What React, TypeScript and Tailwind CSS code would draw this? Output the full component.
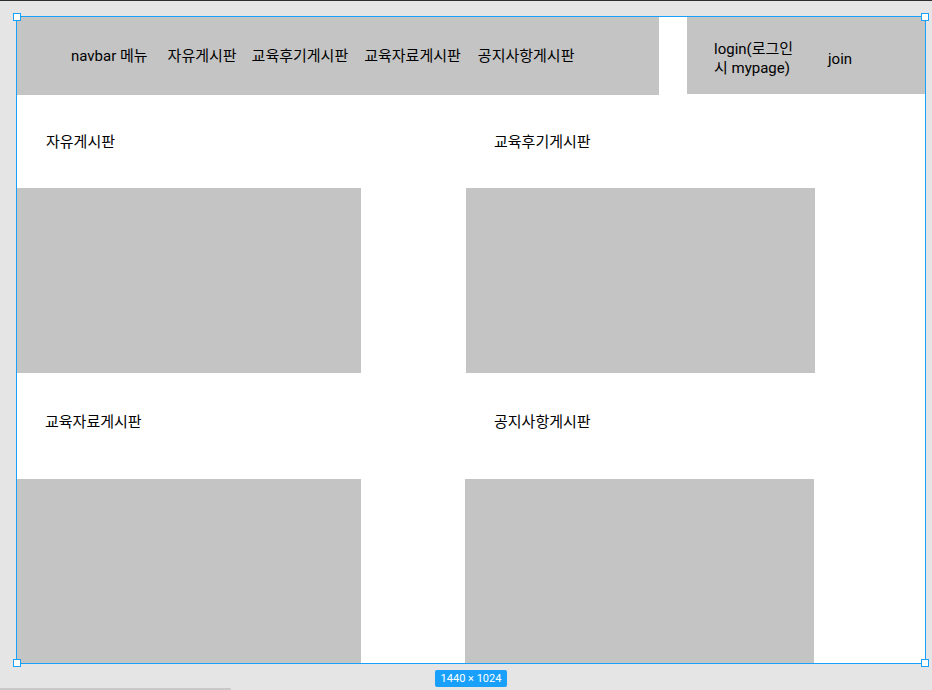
import React from "react";

function K({ children }: { children: React.ReactNode }) {
  return <span className="text-[15px]">{children}</span>;
}

export default function App() {
  return (
    <div className="relative w-[932px] h-[690px] overflow-hidden bg-[#e5e5e5] font-['Roboto','Noto_Sans_CJK_KR',sans-serif] text-[15px] leading-[18px] text-black">
      <div className="h-px bg-[#2c2c2c]" />

      {/* frame */}
      <div className="ml-[16px] mt-[15px] flex h-[648px] w-[910px] flex-col overflow-hidden border border-[#18a0fb] bg-white">
        {/* navbar */}
        <div className="flex h-[78px] shrink-0">
          <div className="flex h-[78px] w-[642px] items-center bg-[#c4c4c4] pb-[1px] pl-[54px]">
            <span>
              navbar <K>메뉴</K>
            </span>
            <span className="ml-[20px]">
              <K>자유게시판</K>
            </span>
            <span className="ml-[15px]">
              <K>교육후기게시판</K>
            </span>
            <span className="ml-[16px]">
              <K>교육자료게시판</K>
            </span>
            <span className="ml-[17px]">
              <K>공지사항게시판</K>
            </span>
          </div>
          <div className="w-[28px]" />
          <div className="flex h-[77px] w-[238px] items-center bg-[#c4c4c4] pl-[27px] pt-[7px]">
            <div className="w-[114px] leading-[19px]">
              login(<K>로그인</K>
              <br />
              <K>시</K> mypage)
            </div>
            <span className="leading-[19px]">join</span>
          </div>
        </div>

        {/* row labels 1 */}
        <div className="flex h-[93px] shrink-0 items-center pt-[1px]">
          <div className="w-[449px] pl-[29px]">
            <K>자유게시판</K>
          </div>
          <div className="pl-[28px]">
            <K>교육후기게시판</K>
          </div>
        </div>

        {/* boxes 1 */}
        <div className="flex h-[185px] shrink-0">
          <div className="w-[344px] bg-[#c4c4c4]" />
          <div className="ml-[105px] w-[349px] bg-[#c4c4c4]" />
        </div>

        {/* row labels 2 */}
        <div className="flex h-[106px] shrink-0 items-center pb-[8px]">
          <div className="w-[448px] pl-[28px]">
            <K>교육자료게시판</K>
          </div>
          <div className="pl-[29px]">
            <K>공지사항게시판</K>
          </div>
        </div>

        {/* boxes 2 */}
        <div className="flex h-[190px] shrink-0">
          <div className="w-[344px] bg-[#c4c4c4]" />
          <div className="ml-[104px] w-[349px] bg-[#c4c4c4]" />
        </div>
      </div>

      {/* size badge */}
      <div className="ml-[16px] mt-[6px] flex w-[910px] justify-center">
        <div className="flex h-[17px] w-[72px] items-center justify-center rounded-[2px] bg-[#18a0fb] text-[11px] leading-none text-white">
          1440 × 1024
        </div>
      </div>

      {/* selection handles */}
      <div className="absolute left-[13px] top-[13px] h-[8px] w-[8px] border border-[#18a0fb] bg-white" />
      <div className="absolute left-[921px] top-[13px] h-[8px] w-[8px] border border-[#18a0fb] bg-white" />
      <div className="absolute left-[13px] top-[659px] h-[8px] w-[8px] border border-[#18a0fb] bg-white" />
      <div className="absolute left-[921px] top-[659px] h-[8px] w-[8px] border border-[#18a0fb] bg-white" />

      {/* scrollbar */}
      <div className="absolute bottom-0 left-0 h-[2px] w-[231px] rounded-r-sm bg-[#c8c8c8]" />
    </div>
  );
}
